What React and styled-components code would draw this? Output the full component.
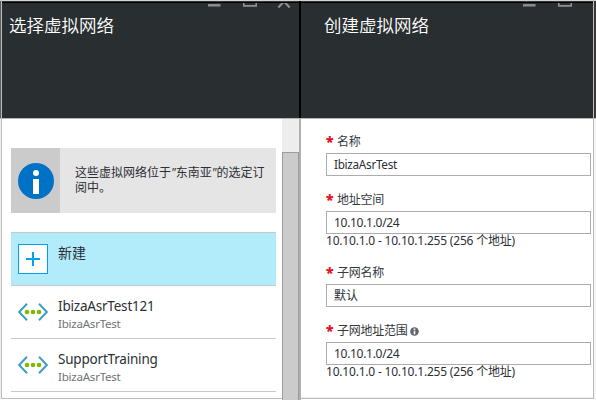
import React from "react";
import styled, { createGlobalStyle } from "styled-components";

const Global = createGlobalStyle`
  *, *::before, *::after { box-sizing: border-box; }
  html, body { margin: 0; padding: 0; background: #fff; overflow: hidden; }
  body { font-family: "Noto Sans", "Noto Sans CJK SC", sans-serif; color: #2b2f36; }
`;

const Screen = styled.main`
  width: 596px;
  height: 400px;
  display: grid;
  grid-template-columns: 1px 1px 297px 2px 292px 1px 2px;
  grid-template-rows: 1px 1px 1px 115px 1px 278px 1px 1px 1px;
  overflow: hidden;
`;

const Strip = styled.div`
  grid-column: ${(p) => p.$col};
  grid-row: ${(p) => p.$row};
  background: ${(p) => p.$color};
`;

const Header = styled.header`
  grid-column: ${(p) => p.$col};
  grid-row: 4;
  background: #292e31;
  display: flex;
  justify-content: space-between;
  overflow: hidden;
`;

const Heading = styled.h1`
  margin: 10px 0 0 ${(p) => p.$left}px;
  font-size: 17.5px;
  line-height: 24px;
  height: 24px;
  font-weight: 350;
  color: #fff;
  white-space: nowrap;
`;

const Controls = styled.svg`
  display: block;
  flex: none;
  width: 93px;
  height: 8px;
  margin-right: ${(p) => p.$shift || 0}px;
`;

const ListPane = styled.section`
  grid-column: 3;
  grid-row: 6 / 10;
  display: flex;
  justify-content: space-between;
  overflow: hidden;
`;

const Column = styled.div`
  width: 265px;
  margin: 29px 0 0 9px;
`;

const Notice = styled.div`
  display: flex;
  height: 65px;
  background: #e5e5e5;
`;

const NoticeIcon = styled.div`
  width: 49px;
  background: #cbcbcb;
  display: flex;
  align-items: center;
  justify-content: center;
`;

const NoticeText = styled.p`
  margin: 17px 0 0 15px;
  width: 198px;
  font-size: 12px;
  line-height: 15px;
  white-space: nowrap;
  i { line-height: 0; }
`;

const List = styled.div`
  margin-top: 19px;
  border-top: 1px solid #c4c8c9;
`;

const Row = styled.div`
  height: 53px;
  display: flex;
  border-bottom: 1px solid #c8c8c8;
  background: ${(p) => (p.$active ? "#b2ebfa" : "#fff")};
`;

const RowIcon = styled.div`
  width: 47px;
  padding: 11px 0 0 7px;
  svg { display: block; }
`;

const Name = styled.div`
  margin-top: 10px;
  font-size: ${(p) => p.$size || 14}px;
  line-height: 20px;
  letter-spacing: ${(p) => p.$track || 0}px;
`;

const Detail = styled.div`
  margin-top: 1px;
  font-size: 11.6px;
  line-height: 14px;
  color: #707478;
  letter-spacing: -0.26px;
`;

const ScrollTrack = styled.div`
  width: 17px;
  padding-top: 33px;
  background: #ededed;
`;

const ScrollThumb = styled.div`
  height: 260px;
  background: #cbcbcb;
  border: 1px solid #9c9c9c;
`;

const FormPane = styled.section`
  grid-column: 5;
  grid-row: 6;
  padding: 14px 2px 0 25px;
  display: flex;
  flex-direction: column;
`;

const Field = styled.div`
  height: ${(p) => p.$height}px;
  flex: none;
`;

const Label = styled.label`
  height: 20px;
  padding-bottom: 2px;
  display: flex;
  align-items: center;
  font-size: 12px;
  line-height: 18px;
  letter-spacing: -0.25px;
  color: #34383c;
  svg { display: block; }
`;

const Star = styled.span`
  width: 11px;
  height: 18px;
  font-family: "Open Sans", sans-serif;
  font-size: 14px;
  line-height: 17px;
  font-weight: 800;
  color: #e81123;
`;

const Input = styled.div`
  width: 265px;
  height: 23px;
  padding-left: 7px;
  border: 1px solid #acacac;
  font-size: ${(p) => p.$size || 12}px;
  line-height: 21px;
  letter-spacing: ${(p) => p.$track || 0}px;
`;

const Hint = styled.div`
  height: 15px;
  font-size: 12px;
  line-height: 14px;
  letter-spacing: -0.2px;
  white-space: nowrap;
`;

const WindowButtons = ({ shift }) => (
  <Controls $shift={shift} viewBox="0 0 93 8" fill="none" stroke="#8d9192" strokeWidth="1.6">
    <path d="M2 2.3H14.5" strokeWidth="2.4" />
    <path d="M37.8 -3V2.9H50.2V-3" />
    <path d="M72.3 4.5L78 -1.5L83.7 4.5" strokeWidth="2" />
  </Controls>
);

const InfoBadge = () => (
  <svg width="36" height="36" viewBox="0 0 36 36">
    <circle cx="18" cy="18" r="18" fill="#0072c6" />
    <circle cx="18" cy="10" r="3" fill="#fff" />
    <path d="M15 16h6v15h-6z" fill="#fff" />
  </svg>
);

const AddIcon = () => (
  <svg width="30" height="30" viewBox="0 0 30 30">
    <rect x=".5" y=".5" width="29" height="29" fill="#fff" stroke="#00a1f1" />
    <path d="M8 15H22M15 8V22" stroke="#00a1f1" strokeWidth="2" />
  </svg>
);

const NetworkIcon = () => (
  <svg width="30" height="30" viewBox="0 0 30 30">
    <path d="M9 6.8L1.2 15L9 23.2M21 6.8L28.8 15L21 23.2" fill="none" stroke="#3f9fcb" strokeWidth="2" />
    <g fill="#7fba00">
      <circle cx="9" cy="15" r="2.3" />
      <circle cx="15" cy="15" r="2.3" />
      <circle cx="21" cy="15" r="2.3" />
    </g>
  </svg>
);

const HelpDot = () => (
  <svg width="12" height="9" viewBox="0 0 12 9">
    <circle cx="6.5" cy="4.5" r="4.3" fill="#60666b" />
    <path d="M5.7 1.5h1.6v1.4H5.7zM5.7 3.8h1.6v3.4H5.7z" fill="#fff" />
  </svg>
);

const networks = [
  { name: "IbizaAsrTest121", detail: "IbizaAsrTest" },
  { name: "SupportTraining", detail: "IbizaAsrTest" },
];

const range = "10.10.1.0 - 10.10.1.255 (256 个地址)";
const fields = [
  { label: "名称", value: "IbizaAsrTest", size: 11.7, track: -0.27, height: 58 },
  { label: "地址空间", value: "10.10.1.0/24", track: -0.3, hint: range, height: 73 },
  { label: "子网名称", value: "默认", height: 58 },
  { label: "子网地址范围", value: "10.10.1.0/24", track: -0.3, hint: range, help: true, height: 73 },
];

export default function App() {
  return (
    <>
      <Global />
      <Screen>
        <Strip $col="1 / 8" $row="1" $color="#d2d6d3" />
        <Strip $col="1 / 8" $row="2" $color="#343938" />
        <Strip $col="1 / 8" $row="3" $color="#000" />
        <Strip $col="1" $row="2 / 5" $color="#5c5e5e" />
        <Strip $col="1" $row="5 / 10" $color="#f0f0f0" />
        <Strip $col="2" $row="1 / 9" $color="#bcbcbc" />
        <Header $col="3">
          <Heading $left={7}>选择虚拟网络</Heading>
          <WindowButtons />
        </Header>
        <Strip $col="4" $row="2 / 5" $color="#000" />
        <Header $col="5">
          <Heading $left={23}>创建虚拟网络</Heading>
          <WindowButtons shift={-21} />
        </Header>
        <Strip $col="7" $row="2 / 5" $color="#3a3838" />
        <Strip $col="1 / 8" $row="5" $color="#b9b5b5" />
        <Strip $col="5" $row="7" $color="#eeeeee" />
        <Strip $col="2 / 7" $row="8" $color="#bcbcbc" />
        <ListPane>
          <Column>
            <Notice>
              <NoticeIcon><InfoBadge /></NoticeIcon>
              <NoticeText>
                这些虚拟网络位于<i>"</i>东南亚<i>"</i>的选定订<br />阅中。
              </NoticeText>
            </Notice>
            <List>
              <Row $active>
                <RowIcon><AddIcon /></RowIcon>
                <Name>新建</Name>
              </Row>
              {networks.map((n) => (
                <Row key={n.name}>
                  <RowIcon><NetworkIcon /></RowIcon>
                  <div>
                    <Name $size={13.5} $track={-0.2}>{n.name}</Name>
                    <Detail>{n.detail}</Detail>
                  </div>
                </Row>
              ))}
            </List>
          </Column>
          <ScrollTrack><ScrollThumb /></ScrollTrack>
        </ListPane>
        <Strip $col="4" $row="6 / 10" $color="#b0b0b0" />
        <FormPane>
          {fields.map((f) => (
            <Field key={f.label} $height={f.height}>
              <Label><Star>*</Star>{f.label}{f.help && <HelpDot />}</Label>
              <Input $size={f.size} $track={f.track}>{f.value}</Input>
              {f.hint && <Hint>{f.hint}</Hint>}
            </Field>
          ))}
        </FormPane>
        <Strip $col="7" $row="6 / 10" $color="#f5f5f5" />
        <Strip $col="6" $row="1 / 9" $color="#bcbcbc" />
      </Screen>
    </>
  );
}
